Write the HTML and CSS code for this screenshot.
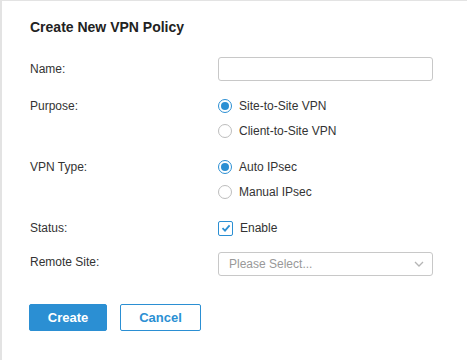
FILE: index.html
```html
<!DOCTYPE html>
<html>
  <head>
    <meta charset="UTF-8" />
    <title>Create New VPN Policy</title>
    <link rel="stylesheet" href="styles.css">
  </head>
  <body>
    <div class="panel">
      <h1>Create New VPN Policy</h1>
      <form class="policy-form">
        <div class="form-row row-name">
          <label class="row-label">Name:</label>
          <input type="text" class="text-input" />
        </div>

        <div class="form-row row-purpose">
          <span class="row-label">Purpose:</span>
          <div class="options">
            <label class="option"><span class="radio checked"></span>Site-to-Site VPN</label>
            <label class="option"><span class="radio"></span>Client-to-Site VPN</label>
          </div>
        </div>

        <div class="form-row row-type">
          <span class="row-label">VPN Type:</span>
          <div class="options">
            <label class="option"><span class="radio checked"></span>Auto IPsec</label>
            <label class="option"><span class="radio"></span>Manual IPsec</label>
          </div>
        </div>

        <div class="form-row">
          <span class="row-label">Status:</span>
          <label class="option">
            <span class="checkbox">
              <svg width="10" height="10" viewBox="0 0 10 10"><path d="M1.5 5.2 L4 7.6 L8.6 2.4" fill="none" stroke="#2b8fd3" stroke-width="1.8"/></svg>
            </span>Enable
          </label>
        </div>

        <div class="form-row">
          <span class="row-label">Remote Site:</span>
          <div class="select">
            <span>Please Select...</span>
            <svg width="10" height="6" viewBox="0 0 10 6"><path d="M1 1 L5 5 L9 1" fill="none" stroke="#b5b5b5" stroke-width="1.3"/></svg>
          </div>
        </div>

        <div class="actions">
          <button type="button" class="btn btn-primary">Create</button>
          <button type="button" class="btn btn-outline">Cancel</button>
        </div>
      </form>
    </div>
  </body>
</html>
```

FILE: styles.css
```css
html, body {
  margin: 0;
  height: 100%;
}
body {
  font-family: "Liberation Sans", Arial, sans-serif;
  font-size: 12px;
  color: #333;
  background: #fff;
}
.panel {
  box-sizing: border-box;
  height: 100%;
  border-left: 2px solid #e3e3e3;
  border-top: 1px solid #e3e3e3;
  padding: 17px 34px 0 28px;
}
h1 {
  margin: 0 0 21px;
  font-size: 14px;
  line-height: 18px;
  font-weight: bold;
  color: #222;
}
.form-row {
  display: flex;
  align-items: flex-start;
  margin-bottom: 14px;
}
.row-name {
  margin-bottom: 15px;
}
.row-purpose {
  margin-bottom: 16px;
}
.row-type {
  margin-bottom: 16px;
}
.row-name .row-label {
  line-height: 24px;
}
.row-label {
  width: 188px;
  flex: none;
  line-height: 20px;
}
.text-input {
  box-sizing: border-box;
  width: 215px;
  height: 24px;
  border: 1px solid #c8c8c8;
  border-radius: 3px;
  margin: 0;
  padding: 0 8px;
  font: inherit;
}
.options {
  display: flex;
  flex-direction: column;
  gap: 5px;
}
.option {
  display: flex;
  align-items: center;
  gap: 7px;
  height: 20px;
}
.radio {
  box-sizing: border-box;
  width: 14px;
  height: 14px;
  border: 1px solid #bdbdbd;
  border-radius: 50%;
  display: flex;
  align-items: center;
  justify-content: center;
}
.radio.checked {
  border-color: #2b8fd3;
}
.radio.checked::after {
  content: "";
  width: 8px;
  height: 8px;
  border-radius: 50%;
  background: #2b8fd3;
}
.checkbox {
  box-sizing: border-box;
  width: 15px;
  height: 15px;
  border: 1px solid #2b8fd3;
  border-radius: 2px;
  display: flex;
  align-items: center;
  justify-content: center;
}
.select {
  box-sizing: border-box;
  width: 215px;
  height: 24px;
  border: 1px solid #c8c8c8;
  border-radius: 3px;
  padding: 0 8px 0 10px;
  display: flex;
  align-items: center;
  justify-content: space-between;
  color: #999;
}
.actions {
  display: flex;
  gap: 13px;
  margin: 28px 0 0 -1px;
}
.btn {
  height: 27px;
  border-radius: 2px;
  font-family: inherit;
  font-size: 13px;
  font-weight: bold;
  cursor: pointer;
}
.btn-primary {
  width: 78px;
  background: #2b8fd3;
  border: 1px solid #2b8fd3;
  color: #fff;
}
.btn-outline {
  width: 81px;
  background: #fff;
  border: 1px solid #2b8fd3;
  color: #2b8fd3;
}
```
